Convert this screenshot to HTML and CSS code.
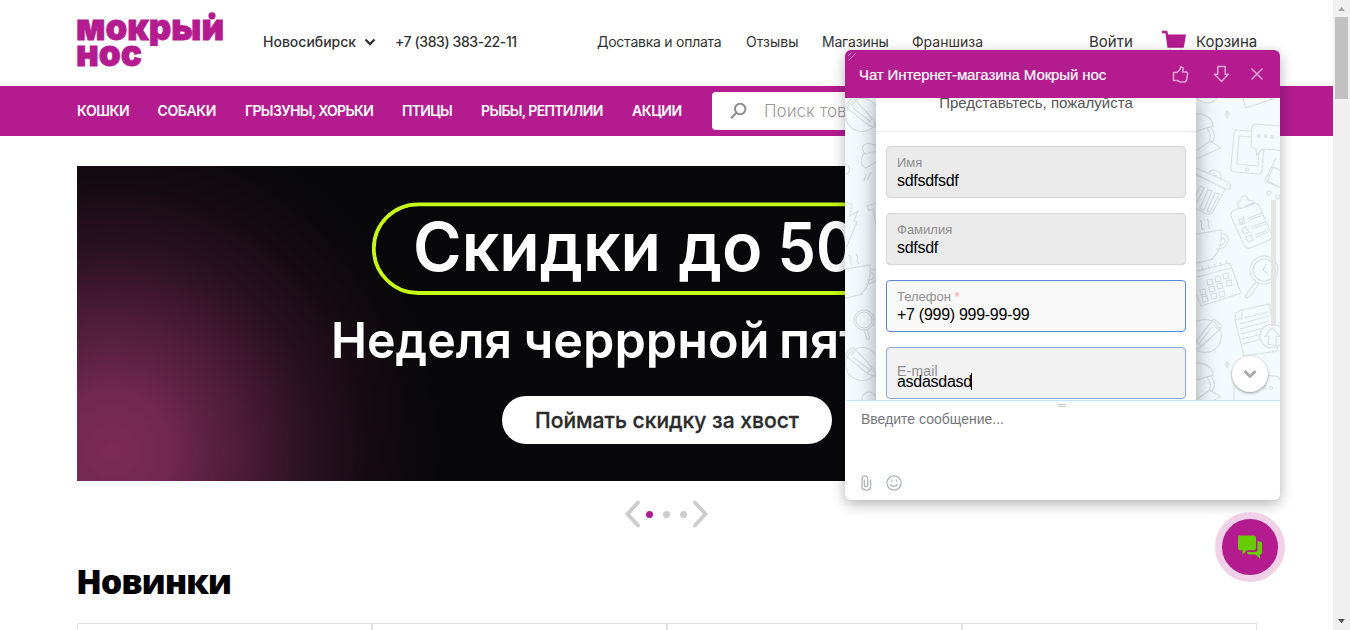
FILE: index.html
```html
<!DOCTYPE html>
<html lang="ru">
<head>
<meta charset="utf-8">
<title>Мокрый нос</title>
<link rel="stylesheet" href="styles.css">
</head>
<body>
<div class="page">
  <header class="header">
    <svg class="logo" width="150" height="60" viewBox="0 0 150 60">
      <defs><clipPath id="logo-clip"><rect x="-2" y="9" width="152" height="27"/></clipPath></defs>
      <text class="logo-text" x="-1" y="30" textLength="148" lengthAdjust="spacingAndGlyphs" clip-path="url(#logo-clip)">мокрый</text>
      <circle cx="135" cy="5.8" r="3.6"/>
      <text class="logo-text" x="-1" y="55.700" textLength="66" lengthAdjust="spacingAndGlyphs">нос</text>
    </svg>
    <div class="city">Новосибирск
      <svg width="12" height="8" viewBox="0 0 12 8"><path d="M1.500 1.500 6 6l4.500-4.500" fill="none" stroke="#333" stroke-width="2.300"/></svg>
    </div>
    <div class="phone">+7 (383) 383-22-11</div>
    <nav class="links"><a class="l1">Доставка и оплата</a><a class="l2">Отзывы</a><a class="l3">Магазины</a><a class="l4">Франшиза</a></nav>
    <a class="login">Войти</a>
    <a class="cart">
      <svg width="25" height="26" viewBox="0 0 25 26"><path d="M0 .8h5.200l1 3.700H24l-2.200 13.300H5.500L3.400 3.300H0z"/><circle cx="8" cy="22" r="2.200"/><circle cx="19" cy="22" r="2.200"/></svg>
      <span>Корзина</span>
    </a>
  </header>
  <div class="menu-bar">
    <nav class="menu"><a class="m1">КОШКИ</a><a class="m2">СОБАКИ</a><a class="m3">ГРЫЗУНЫ, ХОРЬКИ</a><a class="m4">ПТИЦЫ</a><a class="m5">РЫБЫ, РЕПТИЛИИ</a><a class="m6">АКЦИИ</a></nav>
    <div class="search">
      <svg width="17" height="18" viewBox="0 0 17 18"><circle cx="10.200" cy="7" r="5.200" fill="none" stroke="#8e8e8e" stroke-width="2"/><path d="M6.500 10.800 1 16.300" stroke="#8e8e8e" stroke-width="2.200"/></svg>
      <span>Поиск товаров</span>
    </div>
  </div>
  <main class="content">
    <section class="banner">
      <svg width="1180" height="315" viewBox="77 166 1180 315">
        <rect x="373.800" y="204.300" width="586" height="88.700" rx="44.300" fill="none" stroke="#c8fa12" stroke-width="3.800"/>
        <g class="banner-text">
          <g font-size="67">
            <text x="413" y="271" textLength="248" lengthAdjust="spacingAndGlyphs">Скидки</text>
            <text x="678.500" y="271" textLength="84" lengthAdjust="spacingAndGlyphs">до</text>
            <text x="777.500" y="271" textLength="140" lengthAdjust="spacingAndGlyphs">50%</text>
          </g>
          <g font-size="50">
            <text x="331" y="358" textLength="181" lengthAdjust="spacingAndGlyphs">Неделя</text>
            <text x="523.500" y="358" textLength="246" lengthAdjust="spacingAndGlyphs">черррной</text>
            <text x="779" y="358" textLength="222" lengthAdjust="spacingAndGlyphs">пятницы</text>
          </g>
        </g>
        <rect x="502" y="396" width="330" height="48" rx="24" fill="#fff"/>
        <text class="banner-button" x="535" y="428" textLength="264" lengthAdjust="spacingAndGlyphs">Поймать скидку за хвост</text>
      </svg>
    </section>
    <div class="pager">
      <svg width="15" height="28" viewBox="0 0 15 28"><path d="M13 2.500 2.500 14 13 25.500"/></svg>
      <i class="dot active"></i><i class="dot"></i><i class="dot"></i>
      <svg width="15" height="28" viewBox="0 0 15 28"><path d="M2 2.500 12.500 14 2 25.500"/></svg>
    </div>
    <h2 class="heading">Новинки</h2>
    <div class="cards"><div class="card"></div><div class="card"></div><div class="card"></div><div class="card"></div></div>
  </main>
</div>

<aside class="scrollbar">
  <svg width="17" height="17" viewBox="0 0 17 17"><path d="M5 11h7L8.500 7z" fill="#a3a3a3"/></svg>
  <div class="thumb"></div>
  <svg class="down" width="17" height="17" viewBox="0 0 17 17"><path d="M5 6h7l-3.500 4z" fill="#505050"/></svg>
</aside>

<section class="chat">
  <div class="chat-head">
    <svg class="grip" width="12" height="12" viewBox="0 0 12 12"><path d="M2 5 5.500 1.500M2.500 9.500 10 2" stroke="#d88cc9" stroke-width="1"/></svg>
    <span class="chat-title">Чат Интернет-магазина Мокрый нос</span>
    <svg class="ico-like" width="17" height="17" viewBox="0 0 17 17"><path d="M1.500 6.500H5L8 3.500 8.500 1C10.500.7 11.300 2 11 3.500L10.500 6H14q1.800.3 1.500 2l-.8 5.500Q14.200 16 12 16H8L5.500 14.500H1.500z"/></svg>
    <svg class="ico-down" width="17" height="18" viewBox="0 0 17 18"><path d="M4.800 1.500h7.400v7.800h3.300L8.500 16.500 1.500 9.300h3.300z"/></svg>
    <svg class="ico-close" width="14" height="14" viewBox="0 0 14 14"><path d="m1.500 1.500 11 11M12.500 1.500l-11 11"/></svg>
  </div>
  <div class="chat-body">
    <svg class="doodles" width="435" height="302" viewBox="845 98 435 302">
      <defs>
        <g id="pencil"><circle r="16.500"/><path d="m-16-10 5-6q2-1 4 1l18 19 4 9-9-3-21-17q-2-2-1-3zM-11-9l5-5M5 9l6-6M-9-7 9 7"/></g>
        <g id="lamp"><path d="M-16-6c2-12 25-8 25 5l-29 9M-8-15c-1-8-13-8-17 0M7 0c8 12-1 16-1 16M3 1c8 12-1 16-1 16M-11 26l17-12 11 7-28 12zM-17 13l-2 9M-12 13l1 9"/></g>
        <g id="device"><path d="m-11-18 24 2q4 0 4 4l-3 34q0 4-5 4l-22-2q-5 0-4-5l3-33q0-4 3-4zM-9-12l21 2-2 28-21-2z"/><circle cx="-1" cy="21.500" r="1.500"/><path class="fill" d="m8-24 23 2q4 0 4 4v16q-1 5-5 4L14 1 9 7l-1-6q-5-1-5-5l1-16q0-4 4-4z"/><circle cx="11" cy="-12" r="1.400"/><circle cx="17.500" cy="-12" r="1.400"/><circle cx="24" cy="-11" r="1.400"/></g>
        <g id="cup"><path d="m-23-8 36-6c1 16-2 24-11 30l-18 4c-10-6-13-14-14-25M-18 21l24-6M13-10c12-2 8 17-5 15M13-6c6-1 5 8-3 7M-12-13c-4-4 1-6-3-10M-5-14c-4-4 1-6-3-10M2-15c-4-4 1-6-3-10"/></g>
        <g id="glass"><circle r="14"/><circle r="11"/><path d="m-8 12-9 11q-3 3-1 4 2 2 4-1l9-12M2-6l-3 6 5 4"/></g>
      </defs>
      <use href="#pencil" x="862" y="115"/><use href="#pencil" x="862" y="364"/>
      <path d="M876 146c-10-6-17 0-11 8l11-3M864 153c-4 7-4 12 2 15l11-7M866 174l-2 7M871 172l-4 8M845 164c6 0 6 11 0 10M845 202l7 2-2 12 8-5-4 10 3 1-10 24-6-2M876 203l-9 3 2 4 4-1 4 20"/>
      <use href="#cup" x="857" y="279"/>
      <circle cx="864" cy="320" r="10"/><circle cx="864" cy="320" r="8"/><path d="m864 330 3 9q3 2 2-2l-2-8"/><circle cx="869" cy="399" r="7"/>
      <path d="M1197 98c5 7 15 6 20 0M1243 99l3 9 32-11M1227 111q1 3 3 3-2 0-3 4 0-4-2-4 2 0 2-3"/>
      <use href="#lamp" x="1204" y="127"/>
      <use href="#device" x="1248" y="148"/>
      <path d="m1276 158-11 22 15 7M1280 170l-7-3-6 15 12 5"/><circle cx="1269" cy="193" r="2"/><circle cx="1278" cy="197" r="2"/>
      <path d="m1196 168 32 14q4 2 2 6-2 2-4 1l-30-14M1196 174l29 15-13 24q-3 2-8 0l-10-6M1209 173c2-5 10-3 12 2v6M1213 175l4 1M1200 186l-6 14 3 2 7-14zM1208 190l-8 18 4 2 8-19zM1215 193l-8 18 3 1 9-18z"/>
      <use href="#cup" x="1208" y="244"/>
      <path d="m1240 207-5 3q-5 2-4 6l13 29q2 4 6 3l19-8q4-2 3-5l-13-29q-2-4-6-3l-8 3M1239 209l15-5-1-3-5-1c0-6-8-5-7 0l-4 3zM1239 220l4-2 2 5-5 2zM1240 222l2 2 2-8M1242 229l4-2 3 5-5 2zM1246 237l5-2 2 5-5 2zM1248 218l14-5M1249 220l14-5M1251 227l14-5M1252 229l14-5M1255 235l13-5M1256 237l12-5"/>
      <path d="m1197 271 33-8 11 30-40 13-5-12M1197 277l34-9M1202 267l1 4M1208 265l1 4M1214 264l1 4M1220 262l1 4M1226 260l1 4M1207 280l5-1 1 5-5 1zM1215 277l5-1 1 5-5 1zM1223 274l5-1 1 5-5 1zM1200 290l5-1 1 5-5 1zM1209 287l5-1 1 5-5 1zM1217 284l5-1 1 5-5 1zM1226 281l5-1 1 5-5 1zM1202 297l5-1 1 5-5 1zM1211 294l5-1 1 5-5 1zM1219 292l5-1 1 5-5 1z"/>
      <use href="#glass" x="1264" y="270"/>
      <use href="#pencil" transform="translate(1205 336) rotate(90)"/>
      <path d="m1242 310 27-6 9 47-34 5-9-36q0-9 7-10v10M1235 320l7-2M1244 318l24-6M1240 324l29-8M1240 329l29-8M1241 334l29-8M1242 339l20-5M1243 344l18-5"/>
      <g class="fill"><circle cx="1272" cy="336" r="12"/></g><path d="m1272 328 8 8-4 1v9l-8-2 1-8h-4z"/>
      <path d="M1227 361q1 3 3 3-2 0-3 4 0-4-2-4 2 0 2-3M1234 385v15M1253 375l22 1q4 1 5 4"/><circle cx="1264" cy="387" r="1.500"/><circle cx="1271" cy="388" r="1.500"/>
      <use href="#lamp" x="1204" y="376"/>
    </svg>
    <div class="form">
      <div class="form-title">Представьтесь, пожалуйста</div>
      <div class="field"><span class="label">Имя</span><span class="value">sdfsdfsdf</span></div>
      <div class="field"><span class="label">Фамилия</span><span class="value">sdfsdf</span></div>
      <div class="field active-field"><span class="label">Телефон <b>*</b></span><span class="value">+7 (999) 999-99-99</span></div>
      <div class="field focus-field"><span class="label">E-mail</span><span class="value">asdasdasd<i class="caret"></i></span></div>
    </div>
    <div class="chat-scroll"></div>
    <div class="to-bottom"><svg width="14" height="10" viewBox="0 0 14 10"><path d="m1.500 2 5.500 5.500L12.500 2" fill="none" stroke="#aaa" stroke-width="3"/></svg></div>
  </div>
  <div class="chat-input">
    <div class="resize"></div>
    <span class="placeholder">Введите сообщение...</span>
    <div class="tools">
      <svg width="11" height="16" viewBox="0 0 11 16"><path d="M3.300 4.500V10q0 1.700 1.700 1.700T6.700 10V4Q6.700.8 3.900.8T1 4v7.500Q1 15.200 5.300 15.200T9.600 11.500V4.500"/></svg>
      <svg width="16" height="16" viewBox="0 0 16 16"><circle cx="8" cy="8" r="7.100"/><path d="M4.300 9.500q3.700 3.800 7.400 0M5.500 4.500v2.300M10.500 4.500v2.300"/></svg>
    </div>
  </div>
</section>

<div class="chat-button">
  <svg width="26" height="24" viewBox="0 0 26 24"><path d="M2 .5h15q2 0 2 2v10.700q0 2-2 2h-7l-4.500 4.500v-4.500H3q-2 0-2-2V2.500q0-2 1-2zM20.500 6.500H23q2 0 2 2v9q0 2-2 2v4.200L18.500 19.500H12q-2 0-2-2.500h8.500q2 0 2-2z"/></svg>
</div>
</body>
</html>
```

FILE: styles.css
```css
* { box-sizing: border-box; }
body { margin: 0; height: 630px; overflow: hidden; background: #fff; font-family: Inter, "Liberation Sans", sans-serif; color: #333; }
.page { width: 1333px; height: 630px; overflow: hidden; }

.header { display: flex; height: 86px; padding-left: 77px; white-space: nowrap; font-size: 14px; line-height: 20px; padding-top: 32px; }
.logo { margin-top: -22px; width: 150px; flex: none; fill: #b31b8f; overflow: visible; }
.logo-text { font: 900 36px Inter, sans-serif; stroke: #b31b8f; stroke-width: .8px; }
.city { width: 133px; margin-left: 36px; flex: none; display: flex; align-items: center; justify-content: space-between; padding-right: 20px; height: 20px; font-weight: 500; }
.phone { width: 202px; margin-left: -1px; flex: none; font-weight: 500; letter-spacing: -.4px; }
.links { display: flex; flex: none; width: 492px; }
.l1 { width: 149px; letter-spacing: -.25px; }
.l2 { width: 76px; }
.l3 { width: 90px; letter-spacing: -.2px; }
.login { width: 73px; flex: none; font-size: 15px; }
.cart { display: flex; gap: 9px; font-size: 15px; }
.cart svg { fill: #b31b8f; margin-top: -2px; }

.menu-bar { display: flex; align-items: center; height: 50px; padding-left: 77px; background: #b31b8f; }
.menu { display: flex; width: 635px; flex: none; padding-bottom: 1px; color: #fff; font-size: 14px; font-weight: 600; letter-spacing: -.4px; white-space: nowrap; }
.m1 { width: 80.5px; }
.m2 { width: 87.5px; }
.m3 { width: 157px; letter-spacing: -.65px; }
.m4 { width: 79px; letter-spacing: -.7px; }
.m5 { width: 151px; letter-spacing: -.65px; }
.search { display: flex; align-items: center; gap: 17px; width: 545px; height: 38px; padding-left: 18px; background: #fff; border-radius: 4px; color: #999; font-size: 17px; font-weight: 300; }

.content { padding: 30px 0 0 77px; width: 1257px; }
.banner { height: 315px; background: radial-gradient(ellipse 330px 340px at 35px 285px, #7c2b55 0%, #6f284e 18%, #4b1b37 40%, #2a1120 60%, #160b12 78%, #0b090c 92%, #08080a 100%); }
.banner svg { display: block; }
.banner-text { font-family: Inter, sans-serif; font-weight: 600; fill: #fff; }
.banner-button { font: 500 22px Inter, sans-serif; fill: #2b2b2b; stroke: #2b2b2b; stroke-width: .3px; }
.pager { display: flex; align-items: center; justify-content: center; gap: 10px; height: 28px; margin-top: 19px; margin-left: -2px; }
.pager svg { fill: none; stroke: #ccc; stroke-width: 3.8px; stroke-linecap: round; margin: 0 -4px; }
.dot { width: 7px; height: 7px; border-radius: 50%; background: #ccc; }
.dot.active { background: #b31b8f; }
.heading { margin: 33px 0 0 -1px; height: 40px; font: 800 34px/40px "Open Sans", "Noto Sans", sans-serif; letter-spacing: -1.2px; color: #000; }
.cards { display: flex; margin-top: 22px; }
.card { width: 295px; height: 100px; flex: none; border: 1px solid #e2e2e2; }

.scrollbar { position: absolute; top: 0; right: 0; width: 17px; height: 630px; background: #f0f0f0; display: flex; flex-direction: column; }
.scrollbar svg { display: block; }
.thumb { width: 13px; height: 82px; margin: 0 2px; background: #c1c1c1; }
.scrollbar .down { margin-top: auto; }

.chat { position: absolute; left: 845px; top: 50px; width: 435px; height: 450px; border-radius: 6px; background: #fff; overflow: hidden; box-shadow: 0 4px 14px rgba(0,0,0,.3); font-family: "Liberation Sans", Arial, sans-serif; }
.chat-head { position: relative; display: flex; align-items: center; height: 48px; padding-left: 14px; background: #b31b8f; color: #fff; font-size: 15px; white-space: nowrap; }
.chat-head svg { fill: none; stroke: #e3a5d6; stroke-width: 1.5px; flex: none; stroke-linejoin: round; }
.chat-head .grip { position: absolute; left: 1px; top: 1px; }
.chat-title { width: 313px; letter-spacing: -.12px; -webkit-text-stroke: .2px #fff; }
.ico-like { margin-right: 24px; }
.ico-down { margin-right: 20px; }

.chat-body { position: relative; height: 302px; background: #f3fbfe; overflow: hidden; }
.doodles { position: absolute; left: 0; top: 0; fill: none; stroke: #d9e2e5; stroke-width: 1.2px; }
.fill { fill: #f3fbfe; }
.form { position: relative; display: flex; flex-direction: column; gap: 15px; width: 320px; margin-left: 31px; height: 320px; padding: 0 10px; background: #fff; box-shadow: 0 0 20px rgba(0,0,0,.38); }
.form-title { height: 34px; margin: 0 -10px -1px; border-bottom: 1px solid #ebebeb; text-align: center; font-size: 15px; line-height: 10px; color: #555; }
.field { display: flex; flex-direction: column; height: 52px; flex: none; padding: 7px 10px 0; border: 1px solid #d6d6d6; border-radius: 4px; background: #ebebeb; }
.label { height: 18px; font-size: 13px; line-height: 18px; color: #8f8f8f; }
.label b { font-weight: 400; color: #ff9c9c; }
.value { font-size: 16px; line-height: 18px; letter-spacing: -.28px; color: #000; display: flex; }
.active-field { background: #f8f8f8; border-color: #5a8ad8; }
.focus-field { background: #f2f2f2; border-color: #88a8dc; }
.focus-field .label { font-size: 14px; padding-top: 7px; letter-spacing: .2px; }
.caret { width: 1px; height: 17px; margin-left: -1px; background: #000; }
.chat-scroll { position: absolute; left: 426px; top: 102px; width: 5px; height: 126px; background: #e5e5e5; }
.to-bottom { position: absolute; left: 387px; top: 258px; width: 36px; height: 36px; border-radius: 50%; background: #fff; box-shadow: 0 1px 3px rgba(0,0,0,.4); display: flex; align-items: center; justify-content: center; }

.chat-input { display: flex; flex-direction: column; height: 100px; padding: 0 16px; border-top: 1px solid #c4e6fb; }
.resize { width: 8px; height: 3px; margin: 3px 0 0 197px; border: solid #ccc; border-width: 1px 0; }
.placeholder { margin-top: 4px; font-size: 14px; line-height: 16px; color: #74777a; }
.tools { display: flex; gap: 14px; margin-top: 48px; }
.tools svg { fill: none; stroke: #b0b3b5; stroke-width: 1.300px; }

.chat-button { position: absolute; left: 1215px; top: 512px; width: 70px; height: 70px; border: 7px solid #f0d1e8; border-radius: 50%; background: #b31b8f; display: flex; align-items: center; justify-content: center; }
.chat-button svg { fill: #6c0; }
```
